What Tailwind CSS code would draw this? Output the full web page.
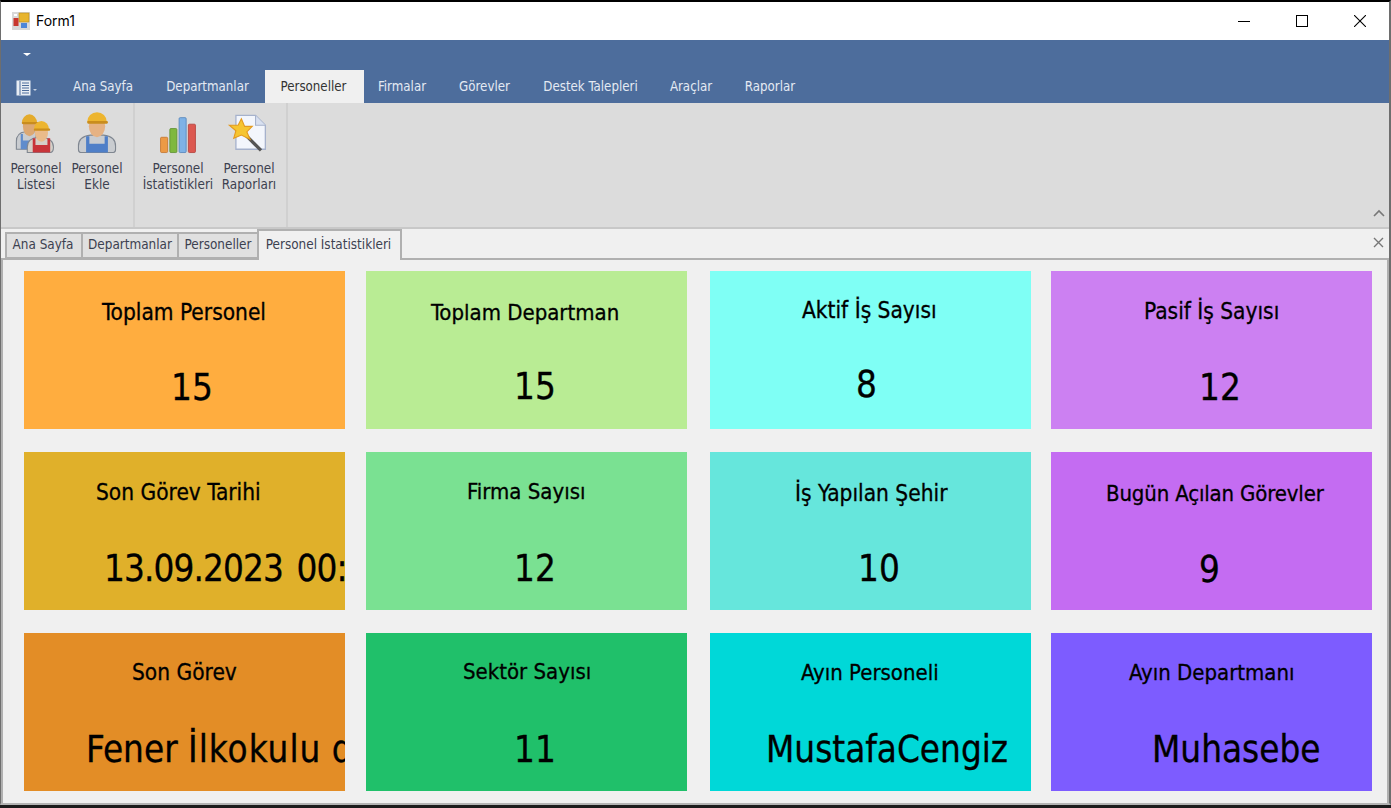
<!DOCTYPE html>
<html lang="tr">
<head>
<meta charset="UTF-8">
<title>Form1</title>
<script src="https://cdn.jsdelivr.net/npm/@tailwindcss/browser@4"></script>
</head>
<body class="w-[1391px] h-[808px] overflow-hidden bg-[#1c1c1c] font-['DejaVu_Sans_Condensed','DejaVu_Sans',sans-serif]">
<div class="h-[805px] flex flex-col bg-[#f0f0f0] border-l border-r-2 border-[#6e6e6e] border-b-2 border-b-[#b4b4b4] border-t-2 border-t-black">
  <!-- title bar -->
  <div class="h-[38px] bg-white flex items-center pl-[11px] shrink-0">
    <svg width="18" height="18" viewBox="0 0 18 18"><rect width="18" height="18" fill="#d8d8d8"/><rect x="7" y="1" width="10" height="9" fill="#e8b52e" stroke="#b58a1e" stroke-width=".6"/><rect x="1.500" y="6" width="5" height="8" fill="#c8372e"/><rect x="9" y="11" width="6" height="5" fill="#4d86d8"/><rect x="2" y="2" width="3" height="2" fill="#fff"/></svg>
    <span class="ml-[6px] text-[14px] leading-[20px] text-black font-['Inter']">Form1</span>
    <div class="ml-auto flex items-center">
      <div class="w-[58px] flex justify-center"><div class="w-[12px] h-px bg-black"></div></div>
      <div class="w-[58px] flex justify-center"><div class="w-[12px] h-[12px] border border-black"></div></div>
      <div class="w-[58px] flex justify-center"><svg width="12" height="12" viewBox="0 0 12 12"><path d="M0 0L12 12M12 0L0 12" stroke="#000" stroke-width="1.1"/></svg></div>
    </div>
  </div>
  <!-- ribbon header -->
  <div class="h-[63px] bg-[#4d6d9c] shrink-0 text-[#e4eaf3]">
    <div class="h-[29px] pl-[22px] pt-[13px]"><div class="w-0 h-0 border-x-[4px] border-x-transparent border-t-[3px] border-t-white"></div></div>
    <div class="h-[34px] flex items-end text-[13.2px]">
      <div class="w-[55px] h-[30px] pl-[15px] flex items-center gap-[2px]">
        <svg width="22" height="16" viewBox="0 0 22 16"><rect x="0.500" y="0.500" width="14" height="15" fill="#e8edf4"/><path d="M4 1V15M6 3H13M6 5.500H13M6 8H13M6 10.500H13M6 13H13" stroke="#4d6d9c"/><path d="M17 9H21L19 11Z" fill="#c5d0e0"/></svg>
      </div>
      <div class="w-[94px] h-[32px] flex items-center justify-center">Ana Sayfa</div>
      <div class="w-[115px] h-[32px] flex items-center justify-center">Departmanlar</div>
      <div class="w-[99px] h-[33px] pt-[1px] pr-[2px] bg-[#f0f0f0] text-[#333] flex items-center justify-center">Personeller</div>
      <div class="w-[76px] h-[32px] flex items-center justify-center">Firmalar</div>
      <div class="w-[89px] h-[32px] flex items-center justify-center">Görevler</div>
      <div class="w-[123px] h-[32px] flex items-center justify-center">Destek Talepleri</div>
      <div class="w-[78px] h-[32px] flex items-center justify-center">Araçlar</div>
      <div class="w-[80px] h-[32px] flex items-center justify-center">Raporlar</div>
    </div>
  </div>
  <!-- ribbon body -->
  <div class="h-[124px] bg-[#dcdcdc] shrink-0 flex relative text-[13.4px] leading-[16px] text-[#3c4150] text-center">
    <div class="w-[134px] border-r-2 border-[#d0d0d0] flex pl-[5px]">
      <div class="w-[60px] flex flex-col items-center pt-[7px]">
        <svg class="blur-[0.4px]" width="48" height="48" viewBox="0 0 44 44">
          <path d="M4 36V29q0-8 8-9h10v16Z" fill="#c9ccd0" stroke="#7f8690"/>
          <path d="M8 36V22h2v6h10v8Z" fill="#5f8ccc"/>
          <ellipse cx="16" cy="15" rx="6" ry="9" fill="#dca873"/>
          <path d="M9 12a7 8 0 0 1 14 0Z" fill="#e4ab2c"/><rect x="9" y="11" width="15" height="2" rx="1" fill="#c98d1e"/>
          <path d="M14 39V34q0-8 10-9h3q11 1 11 9q0 5-3 5Z" fill="#d5d0c8" stroke="#7f8690"/>
          <path d="M19 39V26h2.500v6h11v-6H35v13Z" fill="#c8353a"/>
          <ellipse cx="27" cy="21" rx="6" ry="8" fill="#eabb8a"/>
          <path d="M20 18a7 8 0 0 1 14 0Z" fill="#edb52f"/><rect x="20" y="17" width="15" height="2" rx="1" fill="#cb8e1d"/>
        </svg>
        <div class="mt-[3px]">Personel<br>Listesi</div>
      </div>
      <div class="w-[62px] flex flex-col items-center pt-[7px]">
        <svg class="blur-[0.4px]" width="48" height="48" viewBox="0 0 44 44">
          <path d="M7 39q-2 0-2-3V33q0-9 11-10h12q11 1 11 10v3q0 3-2 3Z" fill="#c9ccd0" stroke="#7f8690"/>
          <path d="M12 39V24h3v7h14v-7h3v15Z" fill="#4f7fc8"/>
          <ellipse cx="22" cy="15" rx="7.500" ry="10" fill="#e6b283"/>
          <path d="M13 11a9 9 0 0 1 18 0Z" fill="#edb52f"/><rect x="13" y="10" width="19" height="2.500" rx="1" fill="#c98d1e"/>
        </svg>
        <div class="mt-[3px]">Personel<br>Ekle</div>
      </div>
    </div>
    <div class="w-[153px] border-r-2 border-[#d0d0d0] flex pl-[7px]">
      <div class="w-[72px] flex flex-col items-center pt-[7px]">
        <svg class="blur-[0.4px]" width="48" height="48" viewBox="0 0 44 44"><rect x="6" y="25" width="6.500" height="14" rx="1" fill="#ec9a45" stroke="#c07028" stroke-width=".7"/><rect x="14.500" y="17" width="6.500" height="22" rx="1" fill="#7fb83e" stroke="#5a8c2a" stroke-width=".7"/><rect x="23" y="7" width="6.500" height="32" rx="1" fill="#7fb2e6" stroke="#4d80b8" stroke-width=".7"/><rect x="31.500" y="13" width="6.500" height="26" rx="1" fill="#dc5850" stroke="#b03a35" stroke-width=".7"/></svg>
        <div class="mt-[3px]">Personel<br>İstatistikleri</div>
      </div>
      <div class="w-[70px] flex flex-col items-center pt-[7px]">
        <svg class="blur-[0.4px]" width="48" height="48" viewBox="0 0 44 44"><path d="M10 5H28L37 14V36H10Z" fill="#f3f6fc" stroke="#a6b2cc" stroke-width="1.200"/><path d="M28 5V14H37" fill="#d8e0f0" stroke="#a6b2cc"/><path d="M19 23L33 37" stroke="#555" stroke-width="3"/><path d="M15 8L18 15L25 15L20 20L23 27L15 23L8 26L10 19L4 14L12 14Z" fill="#f6c530" stroke="#e39a20"/></svg>
        <div class="mt-[3px]">Personel<br>Raporları</div>
      </div>
    </div>
    <svg class="absolute right-[4px] bottom-[10px]" width="12" height="8" viewBox="0 0 12 8"><path d="M1 7L6 2L11 7" fill="none" stroke="#777" stroke-width="1.600"/></svg>
  </div>
  <!-- document tabs -->
  <div class="h-[32px] shrink-0 flex items-end pl-[4px] text-[13.4px] text-[#3c4150] border-t-2 border-[#c8c8c8] relative">
    <div class="h-[27px] w-[78px] pr-[2px] bg-[#e0e0e0] border-2 border-[#b0b0b0] flex items-center justify-center">Ana Sayfa</div>
    <div class="h-[27px] w-[96px] bg-[#e0e0e0] border-2 border-l-0 border-[#b0b0b0] flex items-center justify-center">Departmanlar</div>
    <div class="h-[27px] w-[80px] bg-[#e0e0e0] border-2 border-l-0 border-[#b0b0b0] flex items-center justify-center">Personeller</div>
    <div class="h-[31px] w-[145px] -ml-[2px] pr-[2px] bg-[#f0f0f0] border-2 border-b-0 border-[#b0b0b0] flex items-center justify-center relative z-10 -mb-px">Personel İstatistikleri</div>
    <svg class="absolute right-[5px] top-[8px]" width="11" height="11" viewBox="0 0 11 11"><path d="M1 1L10 10M10 1L1 10" stroke="#777" stroke-width="1.400"/></svg>
  </div>
  <!-- stat cards -->
  <div class="flex-1 border-2 border-b-0 border-[#b0b0b0] -mt-px pl-[21px] pt-[11px] grid grid-cols-[342px_344px_341px_321px] grid-rows-[158px_158px_158px] gap-y-[23px] text-black [-webkit-text-stroke:0.3px_black]">
    <div class="w-[321px] bg-[#ffad3f] overflow-hidden"><div class="text-[22.5px] leading-[24px] mt-[29px] pl-[78px] whitespace-nowrap">Toplam Personel</div><div class="text-[36.5px] leading-[40px] mt-[44px] pl-[147px] whitespace-nowrap">15</div></div>
    <div class="w-[321px] bg-[#b9ec94] overflow-hidden"><div class="text-[22px] leading-[24px] mt-[30px] pl-[65px] whitespace-nowrap">Toplam Departman</div><div class="text-[36.5px] leading-[40px] mt-[42px] pl-[148px] whitespace-nowrap">15</div></div>
    <div class="w-[321px] bg-[#7ffff5] overflow-hidden"><div class="text-[22.5px] leading-[24px] mt-[27px] pl-[92px] whitespace-nowrap">Aktif İş Sayısı</div><div class="text-[36.5px] leading-[40px] mt-[43px] pl-[146px] whitespace-nowrap">8</div></div>
    <div class="w-[321px] bg-[#cc80f2] overflow-hidden"><div class="text-[22.5px] leading-[24px] mt-[28px] pl-[93px] whitespace-nowrap">Pasif İş Sayısı</div><div class="text-[36.5px] leading-[40px] mt-[45px] pl-[148px] whitespace-nowrap">12</div></div>
    <div class="w-[321px] bg-[#e0b02a] overflow-hidden"><div class="text-[22.5px] leading-[24px] mt-[28px] pl-[72px] whitespace-nowrap">Son Görev Tarihi</div><div class="text-[36.5px] leading-[40px] mt-[45px] pl-[80px] whitespace-nowrap tracking-[-0.9px] [word-spacing:4px]">13.09.2023 00:00:00</div></div>
    <div class="w-[321px] bg-[#7ae192] overflow-hidden"><div class="text-[22px] leading-[24px] mt-[28px] pl-[101px] whitespace-nowrap">Firma Sayısı</div><div class="text-[36.5px] leading-[40px] mt-[45px] pl-[148px] whitespace-nowrap">12</div></div>
    <div class="w-[321px] bg-[#66e6dc] overflow-hidden"><div class="text-[22.5px] leading-[24px] mt-[29px] pl-[85px] whitespace-nowrap">İş Yapılan Şehir</div><div class="text-[36.5px] leading-[40px] mt-[44px] pl-[148px] whitespace-nowrap">10</div></div>
    <div class="w-[321px] bg-[#c46cf2] overflow-hidden"><div class="text-[22px] leading-[24px] mt-[30px] pl-[55px] whitespace-nowrap tracking-[-0.15px]">Bugün Açılan Görevler</div><div class="text-[36.5px] leading-[40px] mt-[44px] pl-[148px] whitespace-nowrap">9</div></div>
    <div class="w-[321px] bg-[#e38d26] overflow-hidden"><div class="text-[22.5px] leading-[24px] mt-[27px] pl-[108px] whitespace-nowrap">Son Görev</div><div class="text-[36.5px] leading-[40px] mt-[46px] pl-[62px] whitespace-nowrap">Fener <span class="tracking-[1px]">İlkokulu</span> ders</div></div>
    <div class="w-[321px] bg-[#20c06a] overflow-hidden"><div class="text-[22px] leading-[24px] mt-[27px] pl-[97px] whitespace-nowrap">Sektör Sayısı</div><div class="text-[36.5px] leading-[40px] mt-[46px] pl-[148px] whitespace-nowrap">11</div></div>
    <div class="w-[321px] bg-[#00d8d8] overflow-hidden"><div class="text-[22px] leading-[24px] mt-[28px] pl-[91px] whitespace-nowrap">Ayın Personeli</div><div class="text-[36.5px] leading-[40px] mt-[45px] pl-[56px] whitespace-nowrap">MustafaCengiz</div></div>
    <div class="w-[321px] bg-[#7d5cff] overflow-hidden"><div class="text-[22px] leading-[24px] mt-[28px] pl-[78px] whitespace-nowrap">Ayın Departmanı</div><div class="text-[36.5px] leading-[40px] mt-[45px] pl-[101px] whitespace-nowrap">Muhasebe</div></div>
  </div>
</div>
</body>
</html>
